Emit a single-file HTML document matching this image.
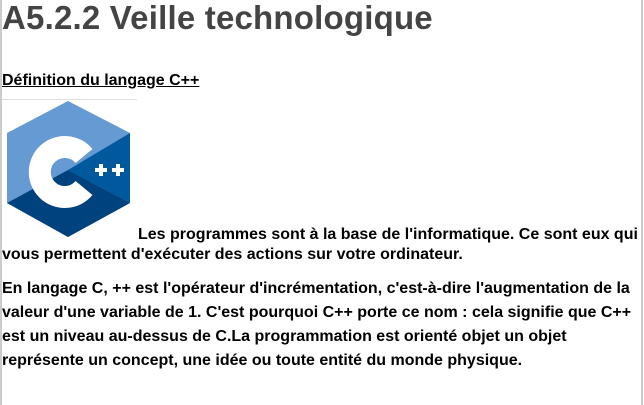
<!DOCTYPE html>
<html><head><meta charset="utf-8"><style>
html,body{margin:0;padding:0;background:#fff;width:644px;height:405px;overflow:hidden;position:relative}
.b{position:absolute;font-family:"Liberation Sans",Arial,sans-serif;font-weight:bold;font-size:16px;color:#000;white-space:nowrap;line-height:18px}
#t{position:absolute;left:2px;top:-1px;font-family:"Liberation Sans",sans-serif;font-weight:bold;font-size:33px;color:#444;white-space:nowrap;line-height:38px;letter-spacing:0.2px}
</style></head><body>
<div style="position:absolute;left:0;top:0;width:2px;height:405px;background:#ccc"></div>
<div style="position:absolute;left:641px;top:0;width:2px;height:405px;background:#ccc"></div>
<div id="t">A5.2.2 Veille technologique</div>
<div class="b" style="left:2px;top:72px;text-decoration:underline">Définition du langage C++</div>
<div style="position:absolute;left:2px;top:99px;width:135px;height:1px;background:#ddd"></div>
<svg style="position:absolute;left:0;top:100px" width="137" height="138" viewBox="0 0 137 138">
<polygon points="68,1 7,33 7,103 68,137 130,103 130,33" fill="#659ad2"/>
<polygon points="68,70 7,103 68,137 130,103" fill="#00427e"/>
<polygon points="68,70 130,103 130,33" fill="#00599c"/>
<path d="M 84 56 A 25 25 0 1 0 84 88" fill="none" stroke="#fff" stroke-width="22"/>
<rect x="95" y="68" width="12" height="4" fill="#fff"/><rect x="99" y="64" width="4" height="12" fill="#fff"/>
<rect x="112" y="68" width="12" height="4" fill="#fff"/><rect x="116" y="64" width="4" height="12" fill="#fff"/>
</svg>
<div class="b" style="left:138px;top:226px">Les programmes sont à la base de l'informatique. Ce sont eux qui</div>
<div class="b" style="left:2px;top:246px">vous permettent d'exécuter des actions sur votre ordinateur.</div>
<div class="b" style="left:2px;top:280px">En langage C, ++ est l'opérateur d'incrémentation, c'est-à-dire l'augmentation de la</div>
<div class="b" style="left:2px;top:304px">valeur d'une variable de 1. C'est pourquoi C++ porte ce nom : cela signifie que C++</div>
<div class="b" style="left:2px;top:328px">est un niveau au-dessus de C.La programmation est orienté objet un objet</div>
<div class="b" style="left:2px;top:352px">représente un concept, une idée ou toute entité du monde physique.</div>
</body></html>
